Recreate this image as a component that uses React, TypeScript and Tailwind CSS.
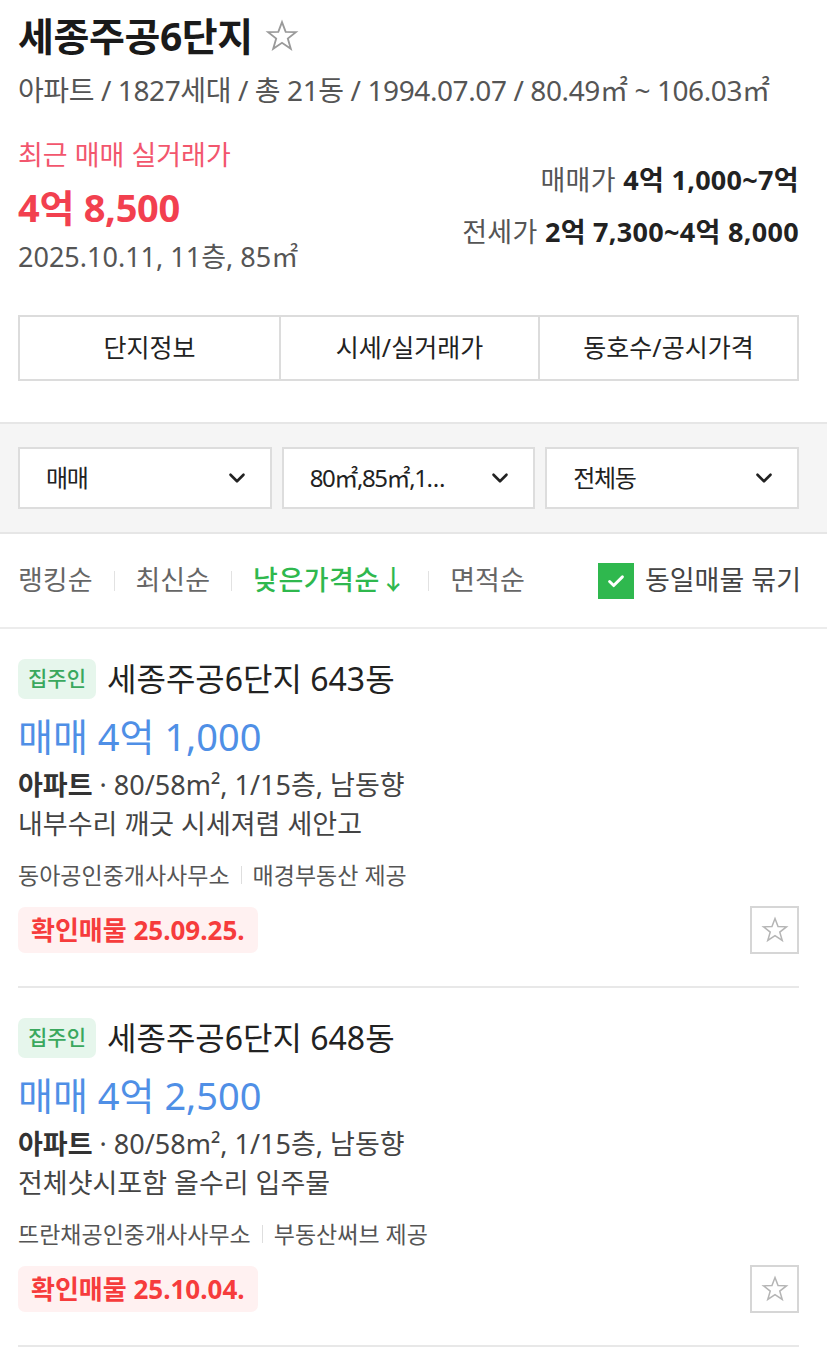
import React from "react";
import { ChevronDown } from "lucide-react";

type Listing = {
  dong: string;
  price: string;
  spec: string;
  desc: string;
  agency: string;
  provider: string;
  confirmed: string;
};

const LISTINGS: Listing[] = [
  {
    dong: "세종주공6단지 643동",
    price: "매매 4억 1,000",
    spec: "80/58m², 1/15층, 남동향",
    desc: "내부수리 깨긋 시세져렴 세안고",
    agency: "동아공인중개사사무소",
    provider: "매경부동산 제공",
    confirmed: "확인매물 25.09.25.",
  },
  {
    dong: "세종주공6단지 648동",
    price: "매매 4억 2,500",
    spec: "80/58m², 1/15층, 남동향",
    desc: "전체샷시포함 올수리 입주물",
    agency: "뜨란채공인중개사사무소",
    provider: "부동산써브 제공",
    confirmed: "확인매물 25.10.04.",
  },
];

const SORTS = ["랭킹순", "최신순", "낮은가격순↓", "면적순"];

const StarOutline = ({ size, color }: { size: number; color: string }) => (
  <svg width={size} height={size} viewBox="0 0 24 24" fill="none">
    <polygon
      points="12,2.2 14.6,9.1 21.8,9.3 16.1,13.8 18.2,21 12,16.8 5.8,21 7.9,13.8 2.2,9.3 9.4,9.1"
      stroke={color}
      strokeWidth="1.3"
      strokeLinejoin="miter"
    />
  </svg>
);

const Divider = () => <span className="mx-[21px] h-[20px] w-px bg-[#e2e2e2]" />;

const ListingCard = ({ item }: { item: Listing }) => (
  <div className="border-b-2 border-[#e8e8e8] pt-[30px] pb-[32px]">
    <div className="flex h-[40px] items-center">
      <span className="flex h-[40px] w-[78px] items-center justify-center rounded-[7px] bg-[#e6f6ec] text-[21px] font-medium text-[#3aa85e]">
        집주인
      </span>
      <span className="ml-[11px] text-[32px] leading-[40px] text-[#222]">{item.dong}</span>
    </div>
    <div className="mt-[15px] text-[38px] leading-[44px] text-[#4f8fe6]">{item.price}</div>
    <div className="mt-[11px] text-[27px] leading-[32px] text-[#333]">
      <span className="font-bold">아파트</span>
      <span className="text-[#444]"> · {item.spec}</span>
    </div>
    <div className="mt-[7px] text-[27px] leading-[32px] text-[#444]">{item.desc}</div>
    <div className="mt-[20px] flex items-center text-[23px] leading-[30px] text-[#555]">
      <span>{item.agency}</span>
      <span className="mx-[11px] h-[18px] w-px bg-[#dedede]" />
      <span>{item.provider}</span>
    </div>
    <div className="mt-[16px] flex h-[48px] items-center justify-between">
      <span className="flex h-[46px] items-center rounded-[7px] bg-[#fff1f1] px-[13px] text-[26px] font-bold text-[#f63c3c]">
        {item.confirmed}
      </span>
      <span className="flex h-[48px] w-[49px] items-center justify-center border-2 border-[#d6d6d6]">
        <StarOutline size={28} color="#b5b5b5" />
      </span>
    </div>
  </div>
);

export default function App() {
  return (
    <div className="min-h-[1370px] bg-white font-['Noto_Sans','Noto_Sans_CJK_KR',sans-serif] text-[#222]">
      {/* 단지 요약 */}
      <div className="pl-[18px] pr-[28px] pt-[12px]">
        <div className="flex items-center">
          <h1 className="text-[39px] font-bold leading-[48px] tracking-[-0.4px] text-[#1a1a1a]">
            세종주공6단지
          </h1>
          <span className="ml-[12px]">
            <StarOutline size={34} color="#9a9a9a" />
          </span>
        </div>
        <p className="mt-[15px] text-[28px] leading-[30px] tracking-[-0.4px] text-[#555]">
          아파트 / 1827세대 / 총 21동 / 1994.07.07 / 80.49㎡ ~ 106.03㎡
        </p>

        <div className="mt-[35px] flex items-start justify-between">
          <div>
            <p className="text-[27px] leading-[30px] text-[#f2566d]">최근 매매 실거래가</p>
            <p className="mt-[15px] text-[38px] font-bold leading-[44px] tracking-[-0.3px] text-[#f2404f]">
              4억 8,500
            </p>
            <p className="mt-[13px] text-[27px] leading-[30px] text-[#555]">
              2025.10.11, 11층, 85㎡
            </p>
          </div>
          <div className="pt-[25px] text-right text-[27px] leading-[30px] text-[#555]">
            <p className="tracking-[0.3px]">
              매매가 <span className="font-bold text-[#222]">4억 1,000~7억</span>
            </p>
            <p className="mt-[22px] tracking-[0.3px]">
              전세가 <span className="font-bold text-[#222]">2억 7,300~4억 8,000</span>
            </p>
          </div>
        </div>

        <div className="mt-[43px] grid h-[66px] grid-cols-3 border-2 border-[#dcdcdc] text-[25px] text-[#222]">
          <div className="flex items-center justify-center">단지정보</div>
          <div className="flex items-center justify-center border-l-2 border-[#dcdcdc]">시세/실거래가</div>
          <div className="flex items-center justify-center border-l-2 border-[#dcdcdc]">동호수/공시가격</div>
        </div>
      </div>

      {/* 필터 */}
      <div className="mt-[41px] border-y-2 border-[#e6e6e6] bg-[#f5f5f5] pb-[23px] pl-[18px] pr-[28px] pt-[23px]">
        <div className="grid grid-cols-3 gap-[10px] text-[24px] text-[#222]">
          {["매매", "80㎡,85㎡,1…", "전체동"].map((label) => (
            <div
              key={label}
              className="flex h-[62px] items-center justify-between border-2 border-[#dddddd] bg-white pl-[26px] pr-[20px]"
            >
              <span className="tracking-[-1.4px]">{label}</span>
              <ChevronDown size={26} strokeWidth={2.4} color="#222" />
            </div>
          ))}
        </div>
      </div>

      {/* 정렬 */}
      <div className="flex h-[95px] items-center justify-between border-b-2 border-[#ececec] pl-[18px] pr-[26px] text-[27px]">
        <div className="flex items-center">
          {SORTS.map((s, i) => (
            <React.Fragment key={s}>
              {i > 0 && <Divider />}
              <span className={i === 2 ? "font-medium tracking-[0.5px] text-[#2fb84e]" : "text-[#666]"}>{s}</span>
            </React.Fragment>
          ))}
        </div>
        <div className="flex items-center">
          <span className="flex h-[36px] w-[36px] items-center justify-center bg-[#2fb84e]">
            <svg width="22" height="22" viewBox="0 0 24 24" fill="none">
              <path d="M5 12.5l4.5 4.5L19 7.5" stroke="white" strokeWidth="3.2" strokeLinecap="round" strokeLinejoin="round" />
            </svg>
          </span>
          <span className="ml-[11px] text-[#444]">동일매물 묶기</span>
        </div>
      </div>

      {/* 매물 목록 */}
      <div className="pl-[18px] pr-[28px]">
        {LISTINGS.map((item) => (
          <ListingCard key={item.dong} item={item} />
        ))}
      </div>
    </div>
  );
}
